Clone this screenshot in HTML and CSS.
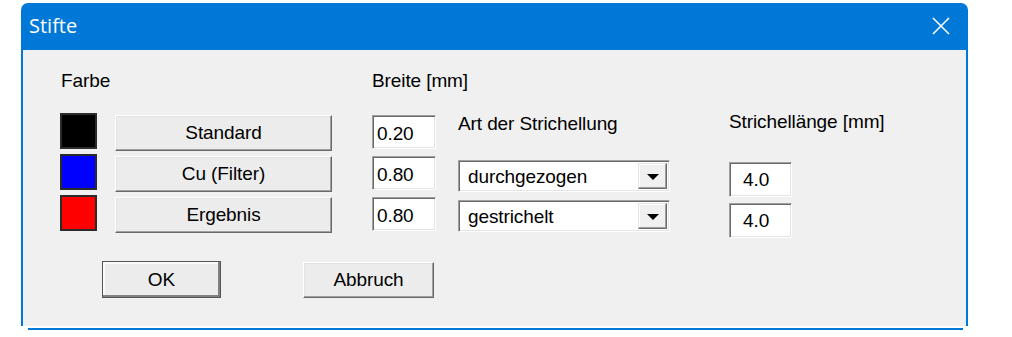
FILE: index.html
```html
<!DOCTYPE html>
<html lang="de">
<head>
<meta charset="utf-8">
<title>Stifte</title>
<link rel="stylesheet" href="styles.css">
</head>
<body>
<div class="window">
  <div class="titlebar">
    <span class="title">Stifte</span>
    <svg class="close" width="18" height="18" viewBox="0 0 18 18"><path d="M1 1 L17 17 M17 1 L1 17" stroke="#fff" stroke-width="1.6" fill="none"/></svg>
  </div>
  <div class="client">
    <div class="headers">
      <span class="h-farbe">Farbe</span>
      <span class="h-breite">Breite [mm]</span>
    </div>
    <div class="main">
      <div class="col swatches">
        <div class="swatch black"></div>
        <div class="swatch blue"></div>
        <div class="swatch red"></div>
      </div>
      <div class="col names">
        <div class="btn name">Standard</div>
        <div class="btn name">Cu (Filter)</div>
        <div class="btn name">Ergebnis</div>
      </div>
      <div class="col widths">
        <div class="field width">0.20</div>
        <div class="field width">0.80</div>
        <div class="field width">0.80</div>
      </div>
      <div class="col types">
        <div class="label">Art der Strichellung</div>
        <div class="combo combo-first"><span class="combo-text">durchgezogen</span><span class="combo-btn"><span class="tri"></span></span></div>
        <div class="combo combo-second"><span class="combo-text">gestrichelt</span><span class="combo-btn"><span class="tri"></span></span></div>
      </div>
      <div class="col lengths">
        <div class="label">Strichellänge [mm]</div>
        <div class="field length length-first">4.0</div>
        <div class="field length length-second">4.0</div>
      </div>
    </div>
    <div class="actions">
      <div class="btn ok">OK</div>
      <div class="btn cancel">Abbruch</div>
    </div>
  </div>
  <div class="bottom-edge"></div>
</div>
</body>
</html>
```

FILE: styles.css
```css
html, body {
  margin: 0;
  padding: 0;
  background: #ffffff;
}

body {
  font-family: "Liberation Sans", Arial, sans-serif;
  font-size: 19px;
  letter-spacing: -0.1px;
  color: #000;
}

.window {
  margin: 3px 0 0 21px;
  width: 947px;
}

.titlebar {
  height: 47px;
  background: #0078d7;
  border-radius: 7px 7px 0 0;
  display: flex;
  align-items: center;
  justify-content: space-between;
  padding: 0 18px 0 8px;
}

.title {
  font-family: "Open Sans", "Noto Sans", sans-serif;
  font-size: 20px;
  font-weight: 500;
  letter-spacing: 0;
  color: #fff;
  margin-top: -2px;
}

.close {
  display: block;
  margin-top: -1px;
}

.client {
  height: 276px;
  background: #f0f0f0;
  border-left: 2px solid #0078d7;
  border-right: 2px solid #0078d7;
  padding: 20px 0 0 37px;
  box-sizing: border-box;
}

.headers {
  display: flex;
  line-height: 22px;
  height: 22px;
}

.h-farbe {
  margin-left: 1px;
  width: 311px;
}

.main {
  display: flex;
  align-items: flex-start;
  margin-top: 19px;
}

.col {
  display: flex;
  flex-direction: column;
}

.swatches {
  margin-top: 2px;
  gap: 5px;
}

.swatch {
  width: 37px;
  height: 36px;
  box-sizing: border-box;
  border: 2px solid #2b2b2b;
}

.black { background: #000; }
.blue { background: #0000ff; }
.red { background: #ff0000; }

.btn {
  box-sizing: border-box;
  background: #ececec;
  border: 1px solid;
  border-color: #fff #696969 #696969 #fff;
  box-shadow: inset -1px -1px 0 #a0a0a0, inset 1px 1px 0 #e3e3e3;
  display: flex;
  align-items: center;
  justify-content: center;
}

.names {
  margin-left: 18px;
  margin-top: 4px;
  gap: 5px;
}

.name {
  width: 217px;
  height: 36px;
}

.field {
  box-sizing: border-box;
  background: #fff;
  border: 1px solid;
  border-color: #a0a0a0 #fff #fff #a0a0a0;
  box-shadow: inset 1px 1px 0 #696969, inset -1px -1px 0 #e3e3e3;
  display: flex;
  align-items: center;
}

.widths {
  margin-left: 40px;
  margin-top: 4px;
  gap: 7px;
}

.width {
  width: 64px;
  height: 34px;
  padding: 3px 0 0 4px;
}

.label {
  line-height: 22px;
  white-space: nowrap;
}

.types {
  margin-left: 22px;
  margin-top: 2px;
}

.combo {
  box-sizing: border-box;
  width: 212px;
  height: 32px;
  background: #fff;
  border: 1px solid;
  border-color: #a0a0a0 #fff #fff #a0a0a0;
  box-shadow: inset 1px 1px 0 #696969, inset -1px -1px 0 #e3e3e3;
  display: flex;
  align-items: center;
  justify-content: space-between;
  padding: 2px 2px 2px 9px;
}

.combo-first {
  margin-top: 25px;
}

.combo-second {
  margin-top: 8px;
}

.combo-text {
  padding-top: 2px;
}

.combo-btn {
  box-sizing: border-box;
  width: 29px;
  height: 26px;
  background: #f0f0f0;
  border: 1px solid;
  border-color: #e3e3e3 #696969 #696969 #e3e3e3;
  box-shadow: inset -1px -1px 0 #a0a0a0, inset 1px 1px 0 #fff;
  display: flex;
  align-items: center;
  justify-content: center;
}

.tri {
  width: 0;
  height: 0;
  border-left: 6px solid transparent;
  border-right: 6px solid transparent;
  border-top: 6px solid #000;
  margin-top: 2px;
}

.lengths {
  margin-left: 59px;
}

.length {
  width: 63px;
  height: 35px;
  padding: 1px 0 0 13px;
}

.length-first {
  margin-top: 29px;
}

.length-second {
  margin-top: 6px;
}

.actions {
  display: flex;
  align-items: flex-start;
  margin-top: 23px;
  margin-left: 42px;
}

.ok {
  width: 119px;
  height: 37px;
  border-color: #fff #404040 #404040 #fff;
  outline: 1px solid #555;
  outline-offset: -1px;
  box-shadow: inset -2px -2px 0 #808080, inset 2px 2px 0 #fafafa;
}

.cancel {
  width: 131px;
  height: 36px;
  margin-left: 82px;
  margin-top: 1px;
}

.bottom-edge {
  height: 2px;
  background: #0078d7;
  margin: 2px 5px 0 7px;
}
```
